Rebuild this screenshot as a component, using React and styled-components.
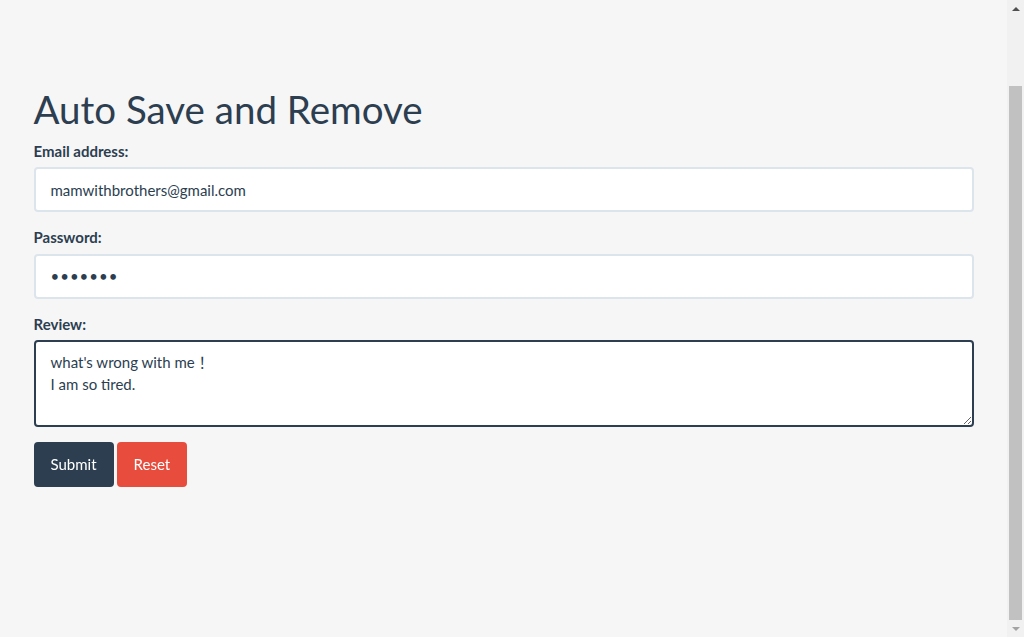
import React, { useLayoutEffect, useRef } from "react";
import styled, { createGlobalStyle } from "styled-components";

const GlobalStyle = createGlobalStyle`
  html, body {
    margin: 0;
    padding: 0;
    height: 100%;
    overflow: hidden;
    background: #f6f6f6;
  }
  body {
    font-family: Lato, "Noto Sans", "Noto Sans CJK SC", sans-serif;
    font-size: 15px;
    line-height: 1.42857;
    color: #2c3e50;
  }
  *, *::before, *::after {
    box-sizing: border-box;
  }
`;

const Shell = styled.div`
  display: flex;
  height: 100vh;
`;

const Main = styled.main`
  flex: 1;
  min-width: 0;
  padding-top: 67px;
`;

const Container = styled.div`
  width: 970px;
  margin: 0 auto;
  padding: 0 15px;
`;

const Title = styled.h1`
  margin: 21px 0 10.5px;
  font-size: 38.5px;
  font-weight: 400;
  line-height: 1.1;
`;

const Group = styled.div`
  margin-bottom: 15px;
`;

const Label = styled.label`
  display: block;
  margin-bottom: 5px;
  font-weight: 700;
`;

const Field = styled.input`
  display: block;
  width: 100%;
  height: 45px;
  padding: 10px 15px;
  font: inherit;
  color: #2c3e50;
  background: #fff;
  border: 2px solid #dce4ec;
  border-radius: 4px;
  outline: 0;
  &[type="password"] {
    letter-spacing: 1px;
  }
  &:focus {
    border-color: #2c3e50;
  }
`;

const Area = styled.textarea`
  display: block;
  width: 100%;
  height: 87px;
  padding: 10px 15px;
  font: inherit;
  line-height: 1.42857;
  color: #2c3e50;
  caret-color: #2c3e50;
  background: #fff;
  border: 2px solid #dce4ec;
  border-radius: 4px;
  outline: 0;
  resize: vertical;
  &:focus {
    border-color: #2c3e50;
  }
`;

const Actions = styled.div`
  display: flex;
  gap: 3px;
`;

const Button = styled.button`
  height: 45px;
  padding: 10px 15px;
  font: inherit;
  color: #fff;
  background: ${(p) => (p.$danger ? "#e74c3c" : "#2c3e50")};
  border: 2px solid ${(p) => (p.$danger ? "#e74c3c" : "#2c3e50")};
  border-radius: 4px;
  cursor: pointer;
`;

/* classic browser scrollbar, page scrolled to its end */
const ScrollBar = styled.div`
  display: flex;
  flex-direction: column;
  width: 17px;
  background: #f1f1f1;
`;

const ScrollArrow = styled.div`
  display: flex;
  align-items: center;
  justify-content: center;
  height: 17px;
  color: ${(p) => (p.$disabled ? "#a3a3a3" : "#505050")};
`;

const ScrollTrack = styled.div`
  flex: 1;
  display: flex;
  flex-direction: column;
  padding: 0 2px;
`;

const ScrollThumb = styled.div`
  margin-top: auto;
  height: 534px;
  background: #c1c1c1;
`;

const Arrow = ({ down }) => (
  <svg width="8" height="4" viewBox="0 0 8 4">
    <polygon
      points={down ? "0,0 8,0 4,4" : "0,4 8,4 4,0"}
      fill="currentColor"
    />
  </svg>
);

const App = () => {
  const areaRef = useRef(null);

  useLayoutEffect(() => {
    const el = areaRef.current;
    if (el) {
      el.focus();
      el.setSelectionRange(el.value.length, el.value.length);
    }
  }, []);

  return (
    <>
      <GlobalStyle />
      <Shell>
        <Main>
          <Container>
            <Title>Auto Save and Remove</Title>
            <form onSubmit={(e) => e.preventDefault()}>
              <Group>
                <Label htmlFor="email">Email address:</Label>
                <Field id="email" type="email" defaultValue="mamwithbrothers@gmail.com" />
              </Group>
              <Group>
                <Label htmlFor="pwd">Password:</Label>
                <Field id="pwd" type="password" defaultValue="1234567" />
              </Group>
              <Group>
                <Label htmlFor="review">Review:</Label>
                <Area
                  id="review"
                  ref={areaRef}
                  defaultValue={"what's wrong with me ！\nI am so tired."}
                />
              </Group>
              <Actions>
                <Button type="submit">Submit</Button>
                <Button type="reset" $danger>
                  Reset
                </Button>
              </Actions>
            </form>
          </Container>
        </Main>
        <ScrollBar>
          <ScrollArrow>
            <Arrow />
          </ScrollArrow>
          <ScrollTrack>
            <ScrollThumb />
          </ScrollTrack>
          <ScrollArrow $disabled>
            <Arrow down />
          </ScrollArrow>
        </ScrollBar>
      </Shell>
    </>
  );
};

export default App;
